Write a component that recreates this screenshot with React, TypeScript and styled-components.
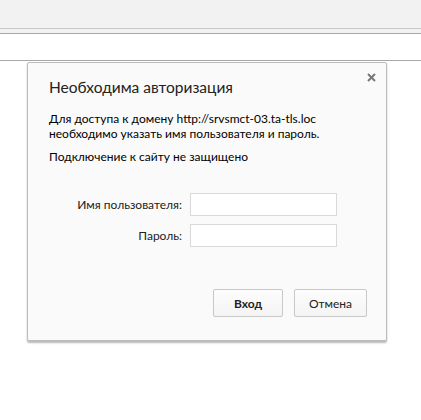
import React from "react";
import styled, { createGlobalStyle } from "styled-components";

const Global = createGlobalStyle`
  html, body { margin: 0; padding: 0; background: #ffffff; }
  body { font-family: Lato, "Noto Sans", sans-serif; }
`;

const Page = styled.div`
  width: 421px;
  height: 420px;
  display: flex;
  flex-direction: column;
  overflow: hidden;
`;

const Toolbar = styled.div`
  height: 28px;
  background: #f2f2f2;
  border-bottom: 1px solid #c8c8c8;
`;

const Strip = styled.div`
  height: 4px;
  background: #f2f2f2;
  border-bottom: 1px solid #a8a8a8;
`;

const Blank = styled.div`
  height: 26px;
  background: #ffffff;
  border-bottom: 1px solid #a8a8a8;
`;

const Dialog = styled.div`
  position: relative;
  margin: 1px 0 0 27px;
  width: 358px;
  height: 277px;
  border: 1px solid #bdbdbd;
  border-radius: 2px;
  background: #fafafa;
  box-shadow: 0 2px 2px rgba(0, 0, 0, 0.28);
  box-sizing: content-box;
  display: flex;
  flex-direction: column;
`;

const Close = styled.button`
  position: absolute;
  top: 9px;
  right: 10px;
  width: 10px;
  height: 10px;
  padding: 0;
  border: 0;
  background: transparent;
  display: flex;
  align-items: center;
  justify-content: center;
`;

const Title = styled.h1`
  margin: 14px 0 0 21px;
  font-size: 15.5px;
  line-height: 20px;
  font-weight: 400;
  color: #222;
`;

const Text = styled.p<{ $top: number }>`
  margin: ${(p) => p.$top}px 0 0 21px;
  font-size: 12px;
  line-height: 15px;
  color: #000;
`;

const Form = styled.div`
  margin: 29px 0 0 0;
  display: grid;
  grid-template-columns: 154px 147px;
  column-gap: 8px;
  row-gap: 8px;
  align-items: center;
`;

const Label = styled.label`
  text-align: right;
  font-size: 12px;
  color: #222;
`;

const Input = styled.input`
  width: 147px;
  height: 23px;
  box-sizing: border-box;
  border: 1px solid #d9d9d9;
  background: #fff;
  margin: 0;
  padding: 0 4px;
`;

const Buttons = styled.div`
  margin-top: auto;
  margin-bottom: 23px;
  padding-right: 19px;
  display: flex;
  justify-content: flex-end;
  gap: 11px;
`;

const Button = styled.button<{ $w: number; $primary?: boolean }>`
  height: 28px;
  width: ${(p) => p.$w}px;
  padding: 0;
  box-sizing: border-box;
  border: 1px solid #c8c8c8;
  border-radius: 2px;
  background: linear-gradient(#fdfdfd, #f4f4f4);
  font-family: Lato, "Noto Sans", sans-serif;
  font-size: 12px;
  font-weight: ${(p) => (p.$primary ? 700 : 400)};
  color: #222;
`;

export default function App() {
  return (
    <Page>
      <Global />
      <Toolbar />
      <Strip />
      <Blank />
      <Dialog>
        <Close aria-label="Закрыть">
          <svg width="9" height="9" viewBox="0 0 9 9">
            <path d="M1 1L8 8M8 1L1 8" stroke="#777" strokeWidth="2" />
          </svg>
        </Close>
        <Title>Необходима авторизация</Title>
        <Text $top={14}>
          Для доступа к домену http://srvsmct-03.ta-tls.loc
          <br />
          необходимо указать имя пользователя и пароль.
        </Text>
        <Text $top={8}>Подключение к сайту не защищено</Text>
        <Form>
          <Label>Имя пользователя:</Label>
          <Input />
          <Label>Пароль:</Label>
          <Input type="password" />
        </Form>
        <Buttons>
          <Button $w={70} $primary>Вход</Button>
          <Button $w={73}>Отмена</Button>
        </Buttons>
      </Dialog>
    </Page>
  );
}
